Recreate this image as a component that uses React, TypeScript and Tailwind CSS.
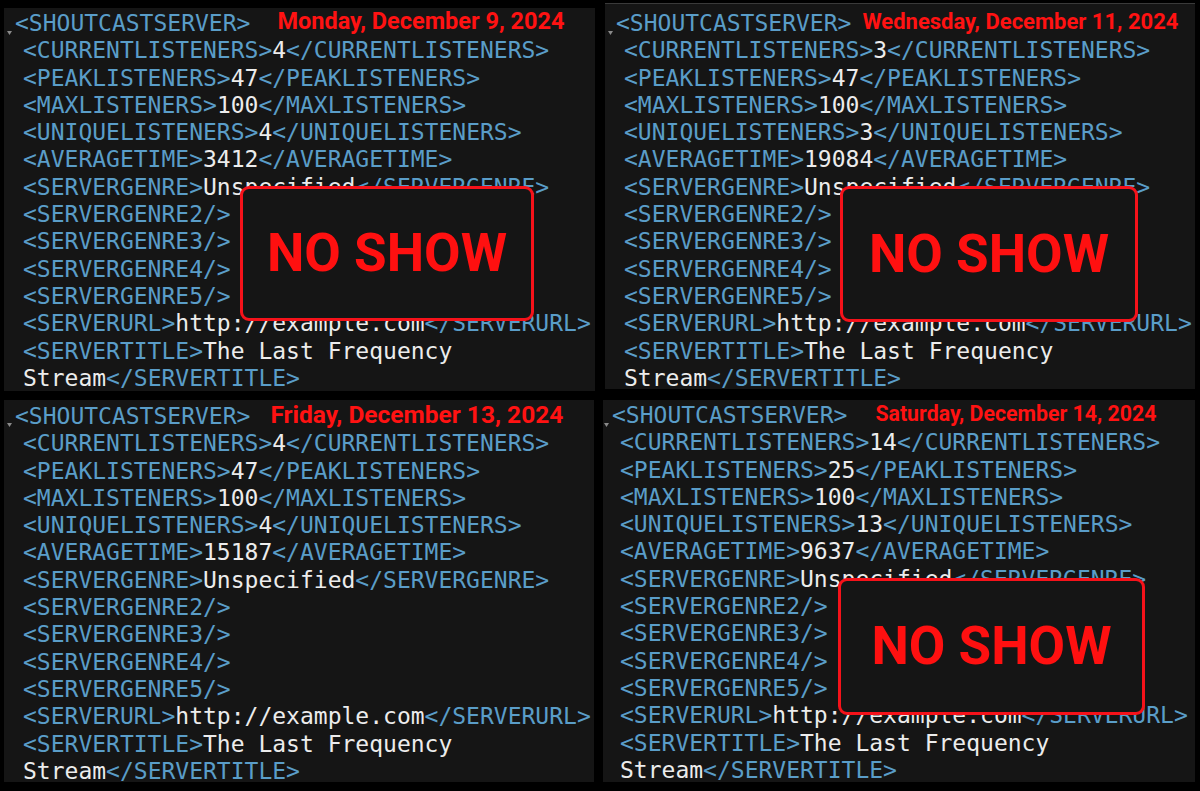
import React from 'react';

type Panel = {
    current: string;
    peak: string;
    unique: string;
    avg: string;
};

const Tag = ({ children }: { children: React.ReactNode }) => (
    <span className="text-[#5a9dc8]">{children}</span>
);
const Val = ({ children }: { children: React.ReactNode }) => (
    <span className="text-[#ececec]">{children}</span>
);

const Line = ({ children }: { children: React.ReactNode }) => (
    <div className="pl-[8px] whitespace-pre">{children}</div>
);

const XmlBody = ({ p }: { p: Panel }) => (
    <>
        <Line>
            <Tag>&lt;CURRENTLISTENERS&gt;</Tag>
            <Val>{p.current}</Val>
            <Tag>&lt;/CURRENTLISTENERS&gt;</Tag>
        </Line>
        <Line>
            <Tag>&lt;PEAKLISTENERS&gt;</Tag>
            <Val>{p.peak}</Val>
            <Tag>&lt;/PEAKLISTENERS&gt;</Tag>
        </Line>
        <Line>
            <Tag>&lt;MAXLISTENERS&gt;</Tag>
            <Val>100</Val>
            <Tag>&lt;/MAXLISTENERS&gt;</Tag>
        </Line>
        <Line>
            <Tag>&lt;UNIQUELISTENERS&gt;</Tag>
            <Val>{p.unique}</Val>
            <Tag>&lt;/UNIQUELISTENERS&gt;</Tag>
        </Line>
        <Line>
            <Tag>&lt;AVERAGETIME&gt;</Tag>
            <Val>{p.avg}</Val>
            <Tag>&lt;/AVERAGETIME&gt;</Tag>
        </Line>
        <Line>
            <Tag>&lt;SERVERGENRE&gt;</Tag>
            <Val>Unspecified</Val>
            <Tag>&lt;/SERVERGENRE&gt;</Tag>
        </Line>
        <Line><Tag>&lt;SERVERGENRE2/&gt;</Tag></Line>
        <Line><Tag>&lt;SERVERGENRE3/&gt;</Tag></Line>
        <Line><Tag>&lt;SERVERGENRE4/&gt;</Tag></Line>
        <Line><Tag>&lt;SERVERGENRE5/&gt;</Tag></Line>
        <Line>
            <Tag>&lt;SERVERURL&gt;</Tag>
            <Val>http://example.com</Val>
            <Tag>&lt;/SERVERURL&gt;</Tag>
        </Line>
        <Line>
            <Tag>&lt;SERVERTITLE&gt;</Tag>
            <Val>The Last Frequency</Val>
        </Line>
        <Line>
            <Val>Stream</Val>
            <Tag>&lt;/SERVERTITLE&gt;</Tag>
        </Line>
    </>
);

const NoShow = ({ className }: { className: string }) => (
    <div
        className={`absolute flex items-center justify-center rounded-[9px] border-[3px] border-[#f5121a] bg-[#151515] ${className}`}
    >
        <span className="font-['Roboto',sans-serif] font-bold text-[53px] leading-none text-[#ff1010]">
            NO SHOW
        </span>
    </div>
);

const Caret = () => (
    <svg className="absolute left-[-8px] top-[21px]" width="5" height="4" viewBox="0 0 5 4">
        <path d="M0 0 L5 0 L2.5 4 Z" fill="#8a8a8a" />
    </svg>
);

const App: React.FC = () => {
    const mono = "font-['DejaVu_Sans_Mono','Liberation_Mono',monospace] text-[23px] leading-[27.3px]";
    const date = "font-['Roboto',sans-serif] font-bold text-[#ff1212]";

    return (
        <div className="w-[1200px] h-[791px] bg-black overflow-hidden">
            {/* Top row */}
            <div className="flex h-[400px]">
                <div className={`relative ml-[4px] mt-[8px] w-[591px] h-[383px] bg-[#151515] pl-[11px] pt-[2px] ${mono}`}>
                    <div className="relative whitespace-pre">
                        <Caret />
                        <Tag>&lt;SHOUTCASTSERVER&gt;</Tag>
                        <span className={`${date} ml-[27px] text-[23.5px] relative top-[-2px]`}>Monday, December 9, 2024</span>
                    </div>
                    <XmlBody p={{ current: '4', peak: '47', unique: '4', avg: '3412' }} />
                    <NoShow className="left-[236px] top-[178px] w-[294px] h-[135px]" />
                </div>
                <div className={`relative ml-[10px] mt-[3px] w-[590px] h-[386px] bg-[#151515] border-t border-[#3a3a3a] pl-[11px] pt-[6px] ${mono}`}>
                    <div className="relative whitespace-pre">
                        <Caret />
                        <Tag>&lt;SHOUTCASTSERVER&gt;</Tag>
                        <span className={`${date} ml-[11px] text-[22px] relative top-[-2px]`}>Wednesday, December 11, 2024</span>
                    </div>
                    <XmlBody p={{ current: '3', peak: '47', unique: '3', avg: '19084' }} />
                    <NoShow className="left-[235px] top-[182px] w-[298px] h-[136px]" />
                </div>
            </div>

            {/* Bottom row */}
            <div className="flex">
                <div className={`relative ml-[4px] w-[590px] h-[382px] bg-[#151515] pl-[11px] pt-[2px] ${mono}`}>
                    <div className="relative whitespace-pre">
                        <Caret />
                        <Tag>&lt;SHOUTCASTSERVER&gt;</Tag>
                        <span className={`${date} ml-[20px] text-[24.5px] relative top-[-1px]`}>Friday, December 13, 2024</span>
                    </div>
                    <XmlBody p={{ current: '4', peak: '47', unique: '4', avg: '15187' }} />
                </div>
                <div className={`relative ml-[9px] w-[592px] h-[382px] bg-[#151515] pl-[9px] pt-[2px] ${mono}`}>
                    <div className="relative whitespace-pre">
                        <Caret />
                        <Tag>&lt;SHOUTCASTSERVER&gt;</Tag>
                        <span className={`${date} ml-[28px] text-[21.3px] relative top-[-2px]`}>Saturday, December 14, 2024</span>
                    </div>
                    <XmlBody p={{ current: '14', peak: '25', unique: '13', avg: '9637' }} />
                    <NoShow className="left-[235px] top-[178px] w-[307px] h-[137px]" />
                </div>
            </div>
        </div>
    );
};

export default App;
